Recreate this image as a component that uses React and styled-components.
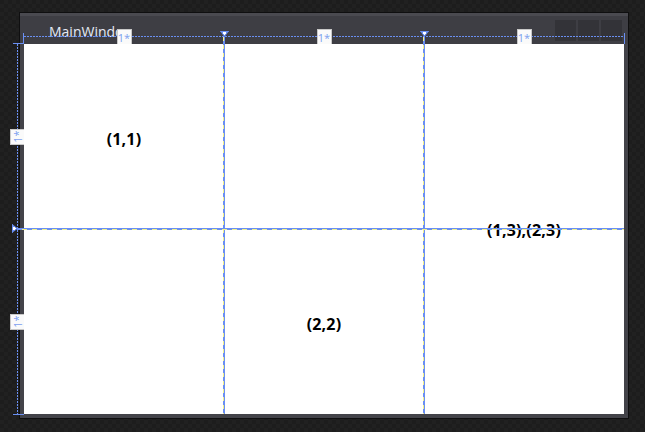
import React from "react";
import styled, { createGlobalStyle, css } from "styled-components";

const GlobalStyle = createGlobalStyle`
  html, body {
    margin: 0;
    padding: 0;
    background: #1c1c1c;
  }
  body {
    font-family: "Open Sans", "Liberation Sans", sans-serif;
  }
`;

const BLUE = "#6a8ff2";
const DASH = "#f2f08a";

const Designer = styled.div`
  position: relative;
  width: 645px;
  height: 432px;
  box-sizing: border-box;
  padding: 12px 0 0 19px;
  overflow: hidden;
  background-color: #1d1d1d;
  background-image: linear-gradient(45deg, #212121 25%, transparent 25%, transparent 75%, #212121 75%),
    linear-gradient(45deg, #212121 25%, transparent 25%, transparent 75%, #212121 75%);
  background-size: 8px 8px;
  background-position: 0 0, 4px 4px;
`;

const Window = styled.div`
  width: 610px;
  height: 407px;
  box-sizing: border-box;
  border: 1px solid #0f0f10;
  background: #434349;
  display: flex;
  flex-direction: column;
`;

const TitleBar = styled.div`
  height: 31px;
  flex: none;
  display: flex;
  align-items: flex-start;
  justify-content: space-between;
  padding: 0 6px 0 29px;
  background: linear-gradient(#4a4a50 0, #4a4a50 3px, #3e3e44 3px);
`;

const Title = styled.span`
  max-width: 71px;
  overflow: hidden;
  white-space: nowrap;
  padding-top: 9px;
  font-size: 14px;
  line-height: 19px;
  color: #e6ebf5;
`;

const Buttons = styled.div`
  display: flex;
  gap: 2px;
  padding-top: 7px;
`;

const ChromeButton = styled.div`
  width: 21px;
  height: 21px;
  background: #333338;
`;

const Client = styled.div`
  margin: 0 4px;
  height: 370px;
  background: #ffffff;
  display: grid;
  grid-template-columns: repeat(3, 200px);
  grid-template-rows: repeat(2, 185px);
`;

const CellText = styled.div`
  grid-column: ${(p) => p.col};
  grid-row: ${(p) => p.row};
  display: flex;
  align-items: center;
  justify-content: center;
  padding-top: ${(p) => (p.span ? 1 : 5)}px;
  font-family: "Open Sans", "Liberation Sans", sans-serif;
  font-weight: 700;
  font-size: 16px;
  letter-spacing: 0.2px;
  color: #000;
`;

/* design-time grid adorners, laid over the window */
const Overlay = styled.div`
  position: absolute;
  left: 10px;
  top: 29px;
  display: grid;
  grid-template-columns: 14px 600px;
  grid-template-rows: 15px 370px;
  pointer-events: none;
`;

const ColumnHeader = styled.div`
  grid-column: 2;
  grid-row: 1;
  position: relative;
  display: grid;
  grid-template-columns: repeat(3, 200px);
  &::before {
    content: "";
    position: absolute;
    left: -1px;
    top: 4px;
    width: 600px;
    height: 11px;
    border-left: 1px solid ${BLUE};
    border-right: 1px solid ${BLUE};
    background: repeating-linear-gradient(90deg, ${BLUE} 0 2px, transparent 2px 3px) 0 3px / 100% 1px no-repeat;
  }
`;

const HeaderCell = styled.div`
  position: relative;
  display: flex;
  justify-content: center;
  ${(p) =>
    p.marker &&
    css`
      &::before {
        content: "";
        position: absolute;
        left: -1px;
        top: 8px;
        width: 2px;
        height: 377px;
        background: linear-gradient(90deg, transparent 0 1px, ${BLUE} 1px),
          repeating-linear-gradient(180deg, ${DASH} 0 4px, ${BLUE} 4px 8px);
      }
      &::after {
        content: "";
        position: absolute;
        left: -4px;
        top: 2px;
        width: 9px;
        height: 6px;
        clip-path: polygon(0 0, 100% 0, 50% 100%);
        background: linear-gradient(${BLUE} 0 1px, transparent 1px),
          conic-gradient(from -37deg at 50% calc(100% - 2px), #ffffff 0 74deg, transparent 74deg),
          ${BLUE};
      }
    `}
`;

const RowRail = styled.div`
  grid-column: 1;
  grid-row: 2;
  position: relative;
  display: grid;
  grid-template-rows: repeat(2, 185px);
  &::before {
    content: "";
    position: absolute;
    left: 3px;
    top: -1px;
    width: 11px;
    height: 370px;
    border-top: 1px solid ${BLUE};
    border-bottom: 1px solid ${BLUE};
    background: repeating-linear-gradient(180deg, ${BLUE} 0 2px, transparent 2px 3px) 4px 0 / 1px 100% no-repeat;
  }
`;

const RailCell = styled.div`
  position: relative;
  display: flex;
  align-items: center;
  justify-content: center;
  ${(p) =>
    p.marker &&
    css`
      &::before {
        content: "";
        position: absolute;
        left: 7px;
        top: -1px;
        width: 607px;
        height: 2px;
        background: linear-gradient(180deg, ${BLUE} 0 1px, transparent 1px),
          repeating-linear-gradient(90deg, ${BLUE} 0 5px, ${DASH} 5px 10px);
      }
      &::after {
        content: "";
        position: absolute;
        left: 2px;
        top: -5px;
        width: 6px;
        height: 9px;
        clip-path: polygon(0 0, 100% 50%, 0 100%);
        background: linear-gradient(90deg, ${BLUE} 0 1px, transparent 1px),
          conic-gradient(from 233deg at calc(100% - 2px) 50%, #ffffff 0 74deg, transparent 74deg),
          ${BLUE};
      }
    `}
`;

const SizeLabel = styled.div`
  width: ${(p) => (p.vertical ? 14 : 15)}px;
  height: ${(p) => (p.vertical ? 16 : 15)}px;
  box-sizing: border-box;
  position: relative;
  z-index: 1;
  background: #fafafa;
  border: 1px solid #c9c9c9;
  border-bottom: ${(p) => (p.vertical ? "1px solid #c9c9c9" : "none")};
  border-right: ${(p) => (p.vertical ? "none" : "1px solid #c9c9c9")};
  display: flex;
  align-items: center;
  justify-content: center;
  font-family: "Open Sans", "Liberation Sans", sans-serif;
  font-size: 11px;
  line-height: 1;
  color: #7c9ff0;
  & > span {
    display: block;
    transform: ${(p) => (p.vertical ? "rotate(-90deg)" : "none")};
  }
`;

const columns = ["*", "*", "*"];
const rows = ["*", "*"];

export default function App() {
  return (
    <>
      <GlobalStyle />
      <Designer>
        <Window>
          <TitleBar>
            <Title>MainWindow</Title>
            <Buttons>
              <ChromeButton />
              <ChromeButton />
              <ChromeButton />
            </Buttons>
          </TitleBar>
          <Client>
            <CellText col="1" row="1">(1,1)</CellText>
            <CellText col="2" row="2">(2,2)</CellText>
            <CellText col="3" row="1 / span 2" span>
              (1,3),(2,3)
            </CellText>
          </Client>
        </Window>

        <Overlay>
          <ColumnHeader>
            {columns.map((c, i) => (
              <HeaderCell key={i} marker={i > 0}>
                <SizeLabel>
                  <span>1{c}</span>
                </SizeLabel>
              </HeaderCell>
            ))}
          </ColumnHeader>
          <RowRail>
            {rows.map((r, i) => (
              <RailCell key={i} marker={i > 0}>
                <SizeLabel vertical>
                  <span>1{r}</span>
                </SizeLabel>
              </RailCell>
            ))}
          </RowRail>
        </Overlay>
      </Designer>
    </>
  );
}
